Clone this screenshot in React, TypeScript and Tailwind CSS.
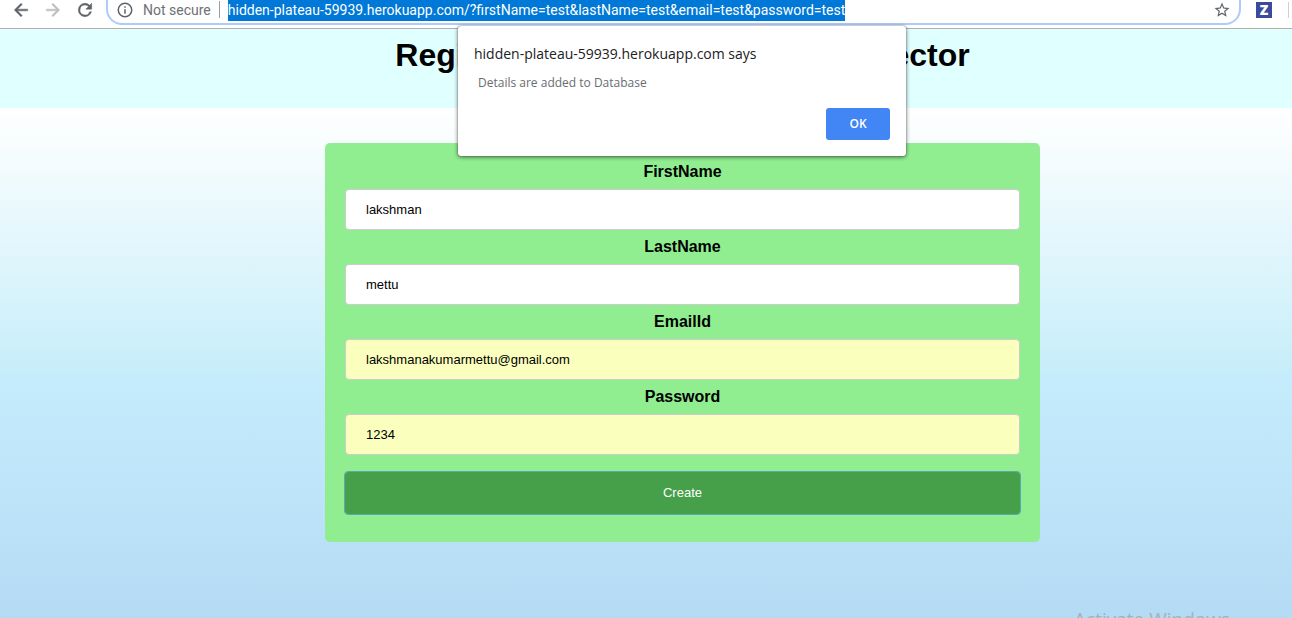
type Field = { id: string; label: string; type: string; value: string; filled?: boolean };

const fields: Field[] = [
  { id: 'firstName', label: 'FirstName', type: 'text', value: 'lakshman' },
  { id: 'lastName', label: 'LastName', type: 'text', value: 'mettu' },
  { id: 'email', label: 'EmailId', type: 'email', value: 'lakshmanakumarmettu@gmail.com', filled: true },
  { id: 'password', label: 'Password', type: 'text', value: '1234', filled: true },
];

function Toolbar() {
  return (
    <header className="flex h-[29px] items-start border-b border-[#b3aeb1] bg-white font-[Roboto,sans-serif]">
      <nav className="flex h-5 shrink-0 items-center gap-3 pl-[11px]">
        <button type="button" aria-label="Back" className="text-[#5f6368]">
          <svg width="20" height="20" viewBox="0 0 24 24" fill="currentColor" stroke="currentColor" strokeWidth="0.6">
            <path d="M20 11H7.83l5.59-5.59L12 4l-8 8 8 8 1.41-1.41L7.83 13H20v-2z" />
          </svg>
        </button>
        <button type="button" aria-label="Forward" className="text-[#bdbdbf]">
          <svg width="20" height="20" viewBox="0 0 24 24" fill="currentColor" stroke="currentColor" strokeWidth="0.6">
            <path d="M12 4l-1.41 1.41L16.17 11H4v2h12.17l-5.58 5.59L12 20l8-8z" />
          </svg>
        </button>
        <button type="button" aria-label="Reload" className="text-[#5f6368]">
          <svg width="20" height="20" viewBox="0 0 24 24" fill="currentColor" stroke="currentColor" strokeWidth="0.6">
            <path d="M17.65 6.35A7.96 7.96 0 0 0 12 4a8 8 0 1 0 7.73 10h-2.08A6 6 0 1 1 12 6c1.66 0 3.14.69 4.22 1.78L13 11h7V4l-2.35 2.35z" />
          </svg>
        </button>
      </nav>
      <div className="ml-[11px] flex h-[25px] min-w-0 grow items-start overflow-hidden">
        <div className="-mt-1 flex h-[29px] w-full items-center rounded-b-2xl border-2 border-t-0 border-[#aecbfa] pr-2 pl-2">
          <svg width="18" height="18" viewBox="0 0 24 24" fill="#5f6368" className="shrink-0">
            <path d="M11 17h2v-6h-2v6zm1-15a10 10 0 1 0 0 20 10 10 0 0 0 0-20zm0 18a8 8 0 1 1 0-16 8 8 0 0 1 0 16zM11 9h2V7h-2v2z" />
          </svg>
          <span className="ml-[9px] text-sm whitespace-nowrap text-[#6d7175]">Not secure</span>
          <span className="ml-2 h-[17px] w-px bg-[#9a9da1]" />
          <span className="ml-2 bg-[#0078d7] text-sm leading-[22px] whitespace-nowrap text-white">
            hidden-plateau-59939.herokuapp.com/?firstName=test&amp;lastName=test&amp;email=test&amp;password=test
          </span>
          <button type="button" aria-label="Bookmark this page" className="ml-auto">
            <svg width="18" height="18" viewBox="0 0 24 24" fill="#5f6368">
              <path d="M22 9.24l-7.19-.62L12 2 9.19 8.63 2 9.24l5.46 4.73L5.82 21 12 17.27 18.18 21l-1.63-7.03L22 9.24zM12 15.4l-3.76 2.27 1-4.28-3.32-2.88 4.38-.38L12 6.1l1.71 4.04 4.38.38-3.32 2.88 1 4.28L12 15.4z" />
            </svg>
          </button>
        </div>
      </div>
      <div className="flex shrink-0 items-center gap-4 pt-0.5 pr-[3px] pl-[15px]">
        <button
          type="button"
          className="flex size-4 items-center justify-center bg-[#3c4a9b] font-['Open_Sans',sans-serif] text-sm leading-4 font-extrabold text-white"
        >
          Z
        </button>
        <span className="h-4 w-px bg-[#cfcfcf]" />
      </div>
    </header>
  );
}

function AlertDialog() {
  return (
    <div
      role="alertdialog"
      aria-labelledby="alert-title"
      aria-describedby="alert-text"
      className="absolute top-[26px] left-[458px] flex w-[448px] flex-col rounded-[3px] bg-white p-4 pt-[18px] font-['Open_Sans','Noto_Sans',sans-serif] shadow-[0_1px_4px_rgba(0,0,0,0.6),0_0_1px_rgba(0,0,0,0.6)]"
    >
      <h2 id="alert-title" className="text-sm leading-5 text-[#202124]">
        hidden-plateau-59939.herokuapp.com says
      </h2>
      <p id="alert-text" className="mt-[9px] pl-1 text-xs leading-5 text-[#696c70]">
        Details are added to Database
      </p>
      <button type="button" className="mt-[15px] h-8 w-16 self-end rounded-[3px] bg-[#4285f4] text-xs font-semibold text-white">
        OK
      </button>
    </div>
  );
}

export default function App() {
  return (
    <div className="relative flex min-h-screen flex-col overflow-x-hidden font-['Liberation_Sans',Arial,sans-serif] text-black">
      <Toolbar />
      <div className="flex grow flex-col bg-[linear-gradient(to_bottom,#ffffff_79px,#cbeffa_325px,#c5ecfc_350px,#b4dbf4_590px)]">
        <div className="h-[79px] bg-[#e0ffff] pt-[7px] pl-[73px]">
          <h1 className="text-center text-[32px] leading-[38px] font-bold">Registration Form for Data Connector</h1>
        </div>
        <main className="grow pt-[35px] pl-[73px]">
          <form className="mx-auto max-w-[715px] rounded-[5px] bg-[#90ee90] px-5 pt-[19px] pb-7">
            {fields.map((f) => (
              <div key={f.id} className="mb-[7px] flex flex-col">
                <label htmlFor={f.id} className="text-center text-base leading-[19px] font-bold">
                  {f.label}
                </label>
                <input
                  id={f.id}
                  type={f.type}
                  defaultValue={f.value}
                  className={
                    f.filled
                      ? 'mt-2 h-[41px] w-full rounded border border-[#ccc] bg-[#faffbd] px-5 text-[13px]'
                      : 'mt-2 h-[41px] w-full rounded border border-[#ccc] bg-white px-5 text-[13px]'
                  }
                />
              </div>
            ))}
            <button
              type="button"
              className="mt-[10px] h-[42px] w-full rounded-[3px] bg-[#45a049] text-[13px] text-white outline-1 outline-[#5aa7b5]"
            >
              Create
            </button>
          </form>
        </main>
      </div>
      <AlertDialog />
      <div className="absolute inset-x-0 bottom-0 flex h-[9px] justify-end overflow-hidden pr-[62px]">
        <span className="font-['Open_Sans','Noto_Sans',sans-serif] text-[19px] leading-[21px] text-[#a8b0b8]">Activate Windows</span>
      </div>
    </div>
  );
}
